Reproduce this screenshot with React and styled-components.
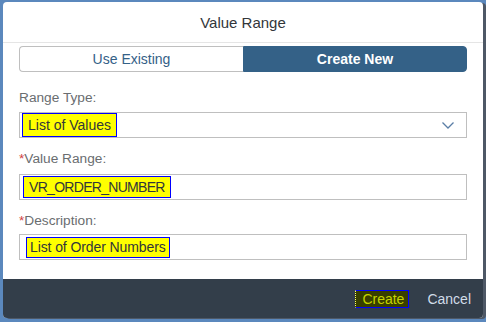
import React from "react";
import styled, { createGlobalStyle } from "styled-components";

const Global = createGlobalStyle`
  html, body { margin: 0; padding: 0; }
  body {
    width: 486px; height: 322px; overflow: hidden;
    background: #5b88bd;
    font-family: "Liberation Sans", Arial, sans-serif;
  }
`;

const Dialog = styled.div`
  margin: 2px 0 0 3px;
  width: 480px;
  height: 316px;
  background: #fff;
  border-radius: 4px;
  box-shadow: 3px 1px 0 #4e5866;
  display: flex;
  flex-direction: column;
  overflow: hidden;
`;

const Header = styled.div`
  height: 40px;
  flex: none;
  display: flex;
  align-items: center;
  justify-content: center;
  border-bottom: 1px solid #e5e5e5;
  font-size: 15px;
  color: #32363a;
`;

const Content = styled.div`
  flex: 1;
  padding: 3px 16px 0 16px;
  display: flex;
  flex-direction: column;
`;

const Segmented = styled.div`
  display: grid;
  grid-template-columns: 1fr 1fr;
  height: 26px;
`;

const Segment = styled.div`
  display: flex;
  align-items: center;
  justify-content: center;
  font-size: 14px;
  box-sizing: border-box;
  border: 1px solid ${(p) => (p.$active ? "#346187" : "#bfbfbf")};
  background: ${(p) => (p.$active ? "#346187" : "#fff")};
  color: ${(p) => (p.$active ? "#fff" : "#346187")};
  font-weight: ${(p) => (p.$active ? "bold" : "normal")};
  border-radius: ${(p) => (p.$active ? "0 4px 4px 0" : "4px 0 0 4px")};
  ${(p) => (p.$active ? "" : "border-right: none;")}
`;

const Label = styled.div`
  font-size: 13.7px;
  line-height: 16px;
  color: #6a6d70;
  padding-top: ${(p) => p.$top}px;
  padding-bottom: ${(p) => p.$bottom}px;
`;

const Req = styled.span`
  color: #d04343;
`;

const Field = styled.div`
  height: 26px;
  box-sizing: border-box;
  border: 1px solid #bfbfbf;
  display: flex;
  align-items: center;
  padding: 0 ${(p) => p.$pad}px;
  background: #fff;
`;

const Highlight = styled.span`
  background: #ffff00;
  border: 1px solid #0000ff;
  color: #32363a;
  font-size: 14px;
  letter-spacing: ${(p) => p.$ls || 0}px;
  padding: 0 ${(p) => p.$px}px;
  height: ${(p) => p.$h}px;
  display: flex;
  align-items: center;
  box-sizing: border-box;
`;

const Chevron = styled.svg`
  margin-left: auto;
  margin-right: 10px;
`;

const Footer = styled.div`
  height: 39px;
  flex: none;
  background: #333e4a;
  display: flex;
  align-items: center;
  justify-content: flex-end;
  padding-right: 12px;
  gap: 18px;
`;

const CreateBtn = styled.div`
  height: 18px;
  box-sizing: border-box;
  padding: 0 4px 0 6px;
  border: 1px solid #0000ff;
  border-left: 1px dotted #ffff66;
  background: #383f00;
  color: #c6d400;
  font-size: 14px;
  display: flex;
  align-items: center;
  margin-top: 1px;
`;

const CancelBtn = styled.div`
  color: #d1dce8;
  font-size: 14px;
  margin-top: 1px;
`;

export default function App() {
  return (
    <>
      <Global />
      <Dialog>
        <Header>Value Range</Header>
        <Content>
          <Segmented>
            <Segment>Use Existing</Segment>
            <Segment $active>Create New</Segment>
          </Segmented>
          <Label $top={18} $bottom={6}>Range Type:</Label>
          <Field $pad={2}>
            <Highlight $px={5} $h={24}>List of Values</Highlight>
            <Chevron width="12" height="7" viewBox="0 0 12 7">
              <path d="M0.5 0.5 L6 6 L11.5 0.5" fill="none" stroke="#5a7ea6" strokeWidth="1.3" />
            </Chevron>
          </Field>
          <Label $top={13} $bottom={7}><Req>*</Req>Value Range:</Label>
          <Field $pad={3}>
            <Highlight $px={5} $h={22} $ls={-0.7}>VR_ORDER_NUMBER</Highlight>
          </Field>
          <Label $top={13} $bottom={5}><Req>*</Req>Description:</Label>
          <Field $pad={6}>
            <Highlight $px={3} $h={21} $ls={-0.1}>List of Order Numbers</Highlight>
          </Field>
        </Content>
        <Footer>
          <CreateBtn>Create</CreateBtn>
          <CancelBtn>Cancel</CancelBtn>
        </Footer>
      </Dialog>
    </>
  );
}
